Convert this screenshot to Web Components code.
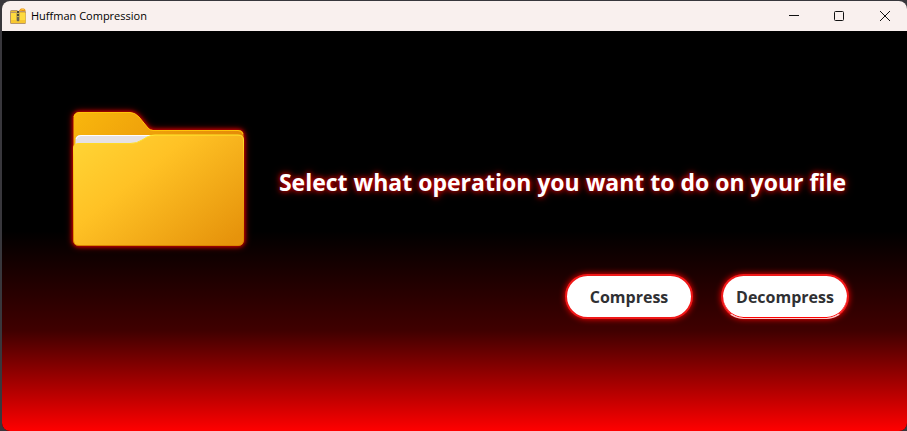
<!DOCTYPE html>
<html lang="en">
<head>
<meta charset="utf-8">
<title>Huffman Compression</title>
<style>
  html, body { height: 100%; margin: 0; }
  body { background: #303035; font-family: "Open Sans", "Noto Sans", sans-serif; }
</style>
</head>
<body>
<app-window>
  <title-bar slot="bar">Huffman Compression</title-bar>
  <operation-panel>
    <folder-art slot="art"></folder-art>
    <span slot="title">Select what operation you want to do on your file</span>
    <pill-button slot="actions">Compress</pill-button>
    <pill-button slot="actions" current>Decompress</pill-button>
  </operation-panel>
</app-window>
<script>
const define = (name, html) => customElements.define(name, class extends HTMLElement {
  constructor() {
    super();
    const t = document.createElement('template');
    t.innerHTML = html;
    this.attachShadow({ mode: 'open' }).append(t.content.cloneNode(true));
  }
});

define('app-window', `
<style>
  :host { display: flex; box-sizing: border-box; min-height: 100vh; padding: 1px 0 0 2px; background: #38373c; }
  .frame { flex: 1; display: flex; flex-direction: column; border-radius: 8px; overflow: hidden; background: #000; }
  ::slotted(operation-panel) { flex: 1; }
</style>
<div class="frame"><slot name="bar"></slot><slot></slot></div>`);

define('title-bar', `
<style>
  :host { display: flex; align-items: center; height: 30px; background: #f9f0ee; color: #000; font-size: 11px; line-height: 16px; }
  .icon { width: 18px; height: 18px; margin: 0 4px 0 7px; }
  h1 { margin: 0; font: inherit; flex: 1; }
  button { width: 45px; height: 30px; padding: 0; border: 0; background: none; display: grid; place-items: center; color: #111; }
  button svg { width: 11px; height: 12px; fill: none; stroke: currentColor; }
  button:hover { background: #e8dfdd; }
</style>
<svg class="icon" viewBox="0 0 18 18" aria-hidden="true">
  <path d="M10 5V3.500L12 1.500H15L16.500 3V5Z" fill="#e8940c"/>
  <path d="M11.500 3.500L13 2.500H15" fill="none" stroke="#ffc13a"/>
  <path d="M1 5Q1 3 2.500 3H8L9 4H15.500Q17 4 17 5.500V15.500Q17 17 15.500 17H2.500Q1 17 1 15.500Z" fill="#b8966a"/>
  <path d="M2 6H16.500V16H2Z" fill="#ffda3e"/>
  <path d="M2 13H16V16H2Z" fill="#f8c72f"/>
  <path d="M2 4.500H8L9 5.500H16" fill="none" stroke="#e9bc35"/>
  <path d="M7 5H11V13.500L9 15L7 13.500Z" fill="#c7ad4c"/>
  <path d="M9 4V13" stroke="#4b4636" stroke-width="2" stroke-dasharray="2 1"/>
  <path d="M8 10H10V14H8Z" fill="#6a6350"/>
</svg>
<h1><slot></slot></h1>
<button type="button" aria-label="Minimize"><svg viewBox="0 0 11 12"><path d="M0 5.500H10"/></svg></button>
<button type="button" aria-label="Maximize"><svg viewBox="0 0 11 12"><rect x=".5" y="1.500" width="9" height="9" rx="1"/></svg></button>
<button type="button" aria-label="Close"><svg viewBox="0 0 11 12"><path d="M1 1L11 11M11 1L1 11"/></svg></button>`);

define('operation-panel', `
<style>
  :host { display: grid; grid-template-columns: 172px 1fr; column-gap: 32px; box-sizing: border-box; padding: 80px 58px 72px 71px;
    align-items: start; background: linear-gradient(#000 50%, #400000 75%, #f00); }
  .side { display: flex; flex-direction: column; align-items: flex-end; gap: 76px; padding-top: 55px; }
  h2 { margin: 0; padding-right: 3px; color: #fff; font-size: 23px; line-height: 32px; font-weight: 700; white-space: nowrap;
    text-shadow: 0 0 5px #e00000, 0 0 8px #b00000; }
  .actions { display: flex; gap: 28px; }
</style>
<slot name="art"></slot>
<div class="side">
  <h2><slot name="title"></slot></h2>
  <div class="actions"><slot name="actions"></slot></div>
</div>`);

define('folder-art', `
<style>
  :host { display: block; }
  svg { display: block; width: 100%; height: auto; overflow: visible; filter: drop-shadow(0 0 2px #e00) drop-shadow(0 0 3px #900); }
</style>
<svg viewBox="0 0 172 136" role="img" aria-label="Folder">
  <defs>
    <linearGradient id="back" x1="0" y1="0" x2="1" y2=".3"><stop offset="0" stop-color="#f9b70d"/><stop offset="1" stop-color="#e58b08"/></linearGradient>
    <linearGradient id="front" gradientUnits="userSpaceOnUse" x1="30" y1="18" x2="135" y2="150"><stop offset="0" stop-color="#ffd233"/><stop offset=".35" stop-color="#ffc225"/><stop offset="1" stop-color="#e6930b"/></linearGradient>
    <linearGradient id="edge" x1="0" y1="0" x2="0" y2="1"><stop offset="0" stop-color="#ffe92c"/><stop offset=".2" stop-color="#ffc21c"/><stop offset="1" stop-color="#d98300"/></linearGradient>
  </defs>
  <path d="M.5 7Q.5 1.500 6 1.500H57Q62 1.500 66 6L75 17Q77 19 80 19H165Q170.500 19 170.500 24V60H.5Z" fill="url(#back)"/>
  <path d="M1 6Q2 1.500 6 1.500H57Q62 1.500 66 6L75 17Q77 19.500 80 19.500H165Q169 19.500 170 23" fill="none" stroke="#ffc50a"/>
  <path d="M2.500 40V29Q2.500 24 8 24H84V40Z" fill="#e6e1e4"/>
  <path d="M3 28Q4 24.500 8 24.500H80" fill="none" stroke="#fff"/>
  <path d="M.5 37Q.5 32.500 6 32.500H57Q64 32.500 69 29L74 26Q78 24 82 24H165Q170.500 24 170.500 29V129Q170.500 134.500 165 134.500H6Q.5 134.500 .5 129Z" fill="url(#front)" stroke="url(#edge)"/>
</svg>`);

define('pill-button', `
<style>
  :host { display: block; }
  button { display: block; width: 128px; height: 45px; padding: 0; border: 2px solid #f01818; border-radius: 23px; background: #fff; color: #2f3033;
    font: 700 16px/24px "Open Sans", "Noto Sans", sans-serif; box-shadow: 0 0 6px #f00; }
  :host([current]) button { border-bottom: 1px solid #ffc8c8; box-shadow: inset 0 -1px 0 #f00, 0 0 6px #f00; }
</style>
<button type="button"><slot></slot></button>`);
</script>
</body>
</html>
